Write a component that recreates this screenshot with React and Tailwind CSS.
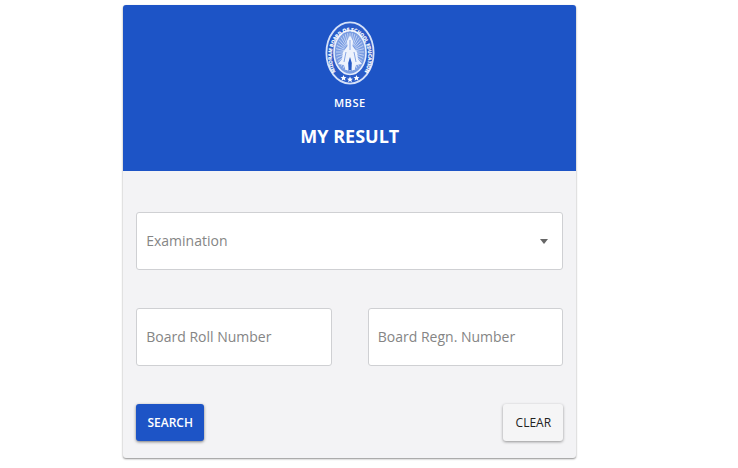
import React from "react";

const STAR = "l.9 2 2.100.2 -1.600 1.400 .5 2.100 -1.900-1.100 -1.900 1.100 .5-2.100 -1.600-1.400 2.100-.2z";

function Emblem() {
  const rays = Array.from({ length: 36 }, (_, i) => {
    const a = (i * Math.PI) / 18;
    return {
      x1: 25 + Math.cos(a) * 6,
      y1: 31 + Math.sin(a) * 8,
      x2: 25 + Math.cos(a) * 14,
      y2: 31 + Math.sin(a) * 19,
    };
  });
  return (
    <svg viewBox="0 0 50 64" className="h-16 w-[50px] overflow-visible" role="img" aria-label="Mizoram Board of School Education">
      <ellipse cx="25" cy="32" rx="23.6" ry="30.6" fill="#2a5cc9" stroke="#d5e1f9" strokeWidth="1.8" />
      <ellipse cx="25" cy="31.500" rx="16" ry="22" fill="#7a9de2" stroke="#e6edfc" strokeWidth="1.6" />
      <g stroke="#d3dff8" strokeWidth="0.8">
        {rays.map((r, i) => (
          <line key={i} {...r} />
        ))}
      </g>
      <path id="emblem-ring" d="M12.500 54 A18.300 25.300 0 1 1 37.500 54" fill="none" />
      <text fill="#fff" stroke="#fff" strokeWidth="0.2" fontSize="4.8" fontWeight="700" fontFamily="'Open Sans', sans-serif">
        <textPath href="#emblem-ring" startOffset="50%" textAnchor="middle">MIZORAM BOARD OF SCHOOL EDUCATION</textPath>
      </text>
      <path d="M25 14.500 L28 20 L27.500 25 L32 31 L33 38 L37 43 L31 44 L29.500 49 H20.500 L19 44 L13 43 L17 38 L18 31 L22.500 25 L22 20 Z" fill="#eef3fd" />
      <path d="M25 36 L26.800 42 L26.500 49 H23.500 L23.200 42 Z" fill="#2458c4" />
      <path d="M21 31 L19 41 M29 31 L31 41 M25 19 V29" stroke="#7d9fe3" strokeWidth="0.9" />
      <g fill="#fff">
        <path d={`M25 55.500 ${STAR}`} />
        <path d={`M18.500 54 ${STAR}`} />
        <path d={`M31.500 54 ${STAR}`} />
      </g>
    </svg>
  );
}

const fieldClass =
  "peer h-[58px] w-full rounded-[3px] border border-[#cfd0d3] bg-white px-[9px] text-sm text-[#333] outline-none focus:border-[#1d54c6]";
const labelClass =
  "pointer-events-none absolute inset-x-[10px] inset-y-0 flex items-center text-sm text-[#858585] peer-focus:hidden";

function TextField({ id, label }) {
  return (
    <div className="relative">
      <input id={id} type="text" placeholder=" " className={fieldClass} />
      <label htmlFor={id} className={`${labelClass} peer-[:not(:placeholder-shown)]:hidden`}>{label}</label>
    </div>
  );
}

export default function App() {
  return (
    <main className="min-h-screen bg-white pt-[5px] font-['Open_Sans','Noto_Sans',sans-serif]">
      <section className="ml-[16.7%] w-[61.4%] rounded-[3px] bg-[#f3f3f5] shadow-[0_1px_2px_rgba(0,0,0,0.45)]">
        <header className="flex flex-col items-center rounded-t-[3px] bg-[#1d54c6] pt-4 pb-5 text-white">
          <Emblem />
          <p className="mt-2 text-[11px] leading-5 font-semibold tracking-wider">MBSE</p>
          <h1 className="mt-2 text-lg leading-[30px] font-bold">MY RESULT</h1>
        </header>
        <form className="px-[13px] pt-[41px] pb-[17px]" onSubmit={(e) => e.preventDefault()}>
          <div className="relative">
            <select id="examination" defaultValue="" className={`${fieldClass} appearance-none`}>
              <option value=""></option>
            </select>
            <label htmlFor="examination" className={labelClass}>Examination</label>
            <svg viewBox="0 0 8 5" className="pointer-events-none absolute top-[27px] right-[15px] h-[5px] w-2" aria-hidden="true">
              <path d="M0 0H8L4 5Z" fill="#666" />
            </svg>
          </div>
          <div className="mt-[38px] grid grid-cols-2 gap-9">
            <TextField id="roll" label="Board Roll Number" />
            <TextField id="regn" label="Board Regn. Number" />
          </div>
          <div className="mt-[38px] flex justify-between">
            <button type="submit" className="h-[37px] w-[68px] rounded-[3px] bg-[#1d54c6] text-xs font-semibold text-white shadow-[0_1px_3px_rgba(0,0,0,0.5)]">
              SEARCH
            </button>
            <button type="reset" className="h-[37px] w-[60px] rounded-[3px] bg-[#f5f5f6] text-xs font-medium text-[#222] shadow-[0_1px_3px_rgba(0,0,0,0.4)]">
              CLEAR
            </button>
          </div>
        </form>
      </section>
    </main>
  );
}
